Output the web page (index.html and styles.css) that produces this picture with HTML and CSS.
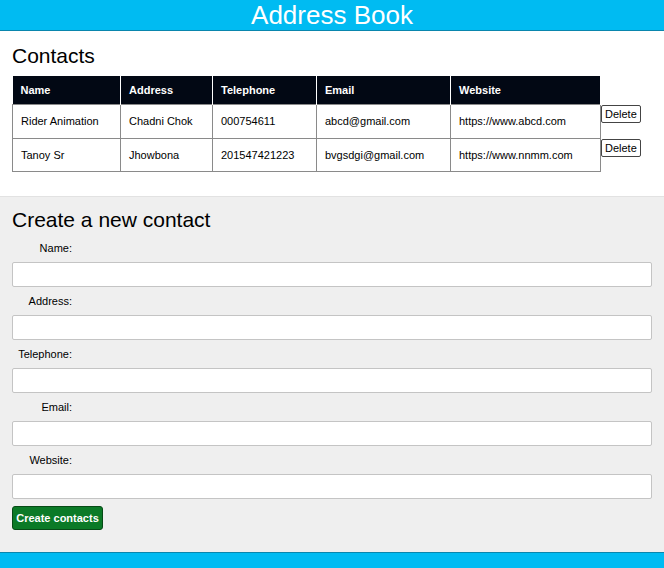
FILE: index.html
```html
<!DOCTYPE html>
<html>
<head>
<meta charset="utf-8">
<title>Address Book</title>
<link rel="stylesheet" href="styles.css">
</head>
<body>
<header class="topbar"><h1 class="title">Address Book</h1></header>
<section class="contacts">
  <h2 class="heading">Contacts</h2>
  <table class="grid">
    <colgroup>
      <col class="c-name"><col class="c-addr"><col class="c-tel"><col class="c-mail"><col class="c-web"><col class="c-act">
    </colgroup>
    <thead>
      <tr><th>Name</th><th>Address</th><th>Telephone</th><th>Email</th><th>Website</th><th class="blank"></th></tr>
    </thead>
    <tbody>
      <tr class="r1"><td>Rider Animation</td><td>Chadni Chok</td><td>000754611</td><td>abcd@gmail.com</td><td>https://www.abcd.com</td><td class="act"><button class="del">Delete</button></td></tr>
      <tr class="r2"><td>Tanoy Sr</td><td>Jhowbona</td><td>201547421223</td><td>bvgsdgi@gmail.com</td><td>https://www.nnmm.com</td><td class="act"><button class="del">Delete</button></td></tr>
    </tbody>
  </table>
</section>
<section class="create">
  <h2 class="heading heading-create">Create a new contact</h2>
  <form class="form">
    <label class="lbl">Name:</label>
    <input class="field" type="text">
    <label class="lbl">Address:</label>
    <input class="field" type="text">
    <label class="lbl">Telephone:</label>
    <input class="field" type="text">
    <label class="lbl">Email:</label>
    <input class="field" type="text">
    <label class="lbl">Website:</label>
    <input class="field" type="text">
    <button class="submit" type="button">Create contacts</button>
  </form>
</section>
<footer class="footbar"></footer>
</body>
</html>
```
FILE: styles.css
```css
html, body {
  margin: 0;
  padding: 0;
  font-family: "Liberation Sans", Arial, sans-serif;
  color: #000;
  background: #efefef;
}
.topbar {
  background: #00bbf2;
  height: 30px;
  border-bottom: 1px solid #0a86ad;
}
.title {
  margin: 0;
  padding-top: 1px;
  font-size: 26px;
  font-weight: normal;
  line-height: 29px;
  color: #fff;
  text-align: center;
}
.contacts {
  background: #fff;
  padding: 12px 12px 24px;
  border-bottom: 1px solid #e2e2e2;
}
.heading {
  margin: 0 0 7px;
  font-size: 21px;
  font-weight: normal;
  line-height: 26px;
}
.heading-create {
  margin-bottom: 8px;
}
.grid {
  border-collapse: collapse;
  table-layout: fixed;
  width: 634px;
  font-size: 11px;
}
.c-name { width: 108px; }
.c-addr { width: 92px; }
.c-tel { width: 104px; }
.c-mail { width: 134px; }
.c-web { width: 150px; }
.c-act { width: 46px; }
.grid th {
  background: #020814;
  color: #fff;
  font-weight: bold;
  text-align: left;
  height: 28px;
  padding: 0 0 0 8px;
  border-left: 1px solid #fff;
  box-sizing: border-box;
}
.grid th:first-child { border-left: none; }
.grid th.blank { background: transparent; }
.grid td {
  border: 1px solid #8a8a8a;
  padding: 0 0 0 8px;
  white-space: nowrap;
}
.r1 td { height: 33px; }
.r2 td { height: 32px; }
.grid td.act {
  border: none;
  border-left: 1px solid #8a8a8a;
  padding: 1px 0 0 0;
  vertical-align: top;
}
.del {
  font-family: "Liberation Sans", Arial, sans-serif;
  font-size: 11px;
  background: #fff;
  border: 1px solid #444;
  border-radius: 2px;
  padding: 1px 3px;
  height: 18px;
  line-height: 14px;
  color: #000;
}
.create {
  padding: 10px 12px 22px;
}
.form {
  display: flex;
  flex-direction: column;
  align-items: flex-start;
}
.lbl {
  display: block;
  width: 60px;
  text-align: right;
  font-size: 11px;
  line-height: 14px;
  margin-bottom: 7px;
}
.field {
  display: block;
  box-sizing: border-box;
  width: 640px;
  height: 25px;
  margin: 0 0 7px;
  border: 1px solid #c4c4c4;
  border-radius: 2px;
  background: #fff;
}
.submit {
  font-family: "Liberation Sans", Arial, sans-serif;
  font-size: 11px;
  font-weight: bold;
  color: #fff;
  background: #0b7a27;
  border: 1px solid #064a16;
  border-radius: 3px;
  height: 24px;
  width: 91px;
  padding: 0;
}
.footbar {
  background: #00bbf2;
  border-top: 1px solid #0a86ad;
  height: 16px;
}
```
